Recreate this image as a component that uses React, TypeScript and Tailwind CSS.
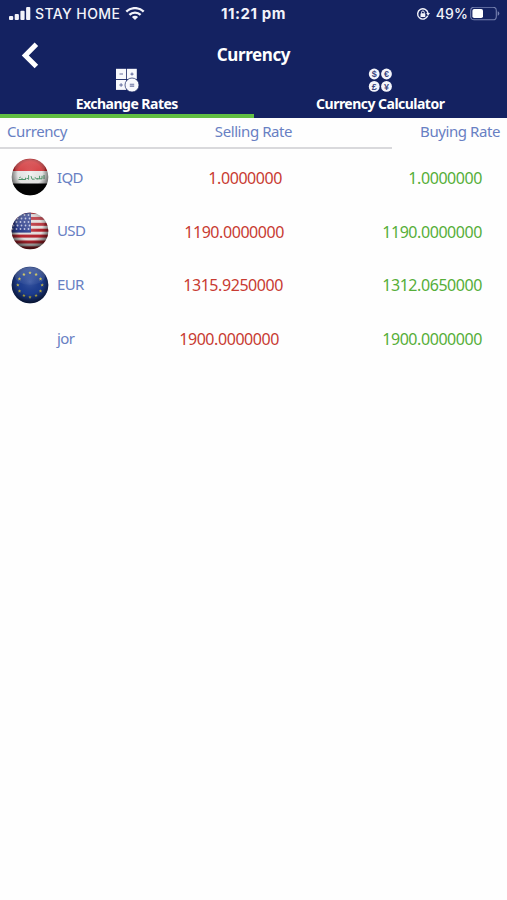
import { ReactNode } from "react";

type Rate = {
  code: string;
  flag?: ReactNode;
  selling: string;
  buying: string;
  offset: string;
};

const FlagShell = ({ id, children }: { id: string; children: ReactNode }) => (
  <svg viewBox="0 0 38 38" className="size-[38px]">
    <defs>
      <clipPath id={`${id}-clip`}>
        <circle cx="19" cy="19" r="18.3" />
      </clipPath>
      <radialGradient id={`${id}-shade`} cx="50%" cy="42%" r="58%">
        <stop offset="0" stopColor="#fff" stopOpacity="0.14" />
        <stop offset="0.55" stopColor="#000" stopOpacity="0.05" />
        <stop offset="1" stopColor="#000" stopOpacity="0.75" />
      </radialGradient>
      <linearGradient id={`${id}-gloss`} x1="0" y1="0" x2="0" y2="1">
        <stop offset="0" stopColor="#fff" stopOpacity="0.25" />
        <stop offset="1" stopColor="#fff" stopOpacity="0.03" />
      </linearGradient>
    </defs>
    <g clipPath={`url(#${id}-clip)`}>
      {children}
      <rect width="38" height="38" fill={`url(#${id}-shade)`} />
      <ellipse cx="19" cy="10" rx="15" ry="9" fill={`url(#${id}-gloss)`} />
    </g>
  </svg>
);

const IraqFlag = () => (
  <FlagShell id="iq">
    <rect width="38" height="13" fill="#dc3034" />
    <rect y="13" width="38" height="12.5" fill="#f0f0ef" />
    <rect y="25.5" width="38" height="13" fill="#050505" />
    <g fill="none" stroke="#4d9a6b" strokeWidth="1">
      <path d="M7.5 21.5h7v-1.8M11 21.5v-1.6M17.6 17v4.3M16 20l1.6 1.5M20 18l1 3.2h2.6M26 20.8h5v-3M28.6 20.8v-3M33 17v4" />
      <path d="M8.3 19.7l1.4-.6M14.5 21.5l1-1M24 19.2l1 1.6h2" />
    </g>
  </FlagShell>
);

const UsaFlag = () => (
  <FlagShell id="us">
    <rect width="38" height="38" fill="#eee8e7" />
    {[0, 1, 2, 3, 4, 5, 6].map((i) => (
      <rect key={i} y={i * 5.9 - 1} width="38" height="3" fill="#bd2530" />
    ))}
    <rect width="20" height="20.6" fill="#2d3f91" />
    {[3, 6.5, 10, 13.5, 17].map((y, row) =>
      [2, 6, 10, 14, 18].map((x) => (
        <circle key={`${x}-${y}`} cx={x + (row % 2) - 0.5} cy={y} r="0.9" fill="#c4cae8" />
      ))
    )}
  </FlagShell>
);

const EuroFlag = () => (
  <FlagShell id="eu">
    <rect width="38" height="38" fill="#1d3f96" />
    {Array.from({ length: 12 }, (_, i) => {
      const angle = (i * Math.PI) / 6;
      const x = 19 + Math.sin(angle) * 12.2;
      const y = 19 - Math.cos(angle) * 12.2;
      return (
        <path
          key={i}
          transform={`translate(${x} ${y})`}
          d="M0-1.8.5-.6 1.7-.5.8.3 1.1 1.5 0 .8-1.1 1.5-.8.3-1.7-.5-.5-.6Z"
          fill="#d2c64c"
        />
      );
    })}
  </FlagShell>
);

const rates: Rate[] = [
  { code: "IQD", flag: <IraqFlag />, selling: "1.0000000", buying: "1.0000000", offset: "pr-[2px]" },
  { code: "USD", flag: <UsaFlag />, selling: "1190.0000000", buying: "1190.0000000", offset: "pr-0" },
  { code: "EUR", flag: <EuroFlag />, selling: "1315.9250000", buying: "1312.0650000", offset: "pr-[1px]" },
  { code: "jor", selling: "1900.0000000", buying: "1900.0000000", offset: "pr-[5px]" },
];

const StatusBar = () => (
  <div className="grid h-7 grid-cols-3 items-center font-['Inter',sans-serif] text-[14px] leading-7 text-[#f2f3fa]">
    <div className="flex items-center pl-[9px]">
      <svg viewBox="0 0 22 14" className="h-[14px] w-[22px]" fill="currentColor">
        <rect y="9" width="4.2" height="4" rx="1" />
        <rect x="5.7" y="7" width="4.2" height="6" rx="1" />
        <rect x="11.4" y="3.7" width="4.2" height="9.3" rx="1" />
        <rect x="17.1" y="0" width="4.2" height="13" rx="1" />
      </svg>
      <span className="ml-[4px] font-medium tracking-[0.4px]">STAY HOME</span>
      <svg viewBox="0 0 20 14" className="ml-[5px] h-[14px] w-5" fill="none" stroke="currentColor">
        <path d="M1.3 4.7a12.4 12.4 0 0 1 17.4 0" strokeWidth="2.4" />
        <path d="M4.4 7.9a8 8 0 0 1 11.2 0" strokeWidth="2.3" />
        <path d="M10 13.1 6.9 10a4.4 4.4 0 0 1 6.2 0Z" fill="currentColor" stroke="none" />
      </svg>
    </div>
    <span className="text-center text-[15px] font-bold tracking-[0.55px]">11:21 pm</span>
    <div className="flex items-center justify-end pr-[7px]">
      <svg viewBox="0 0 14 14" className="size-[14px]" fill="none" stroke="currentColor">
        <path d="M11.7 8.8A5.2 5.2 0 1 1 12 6.2" strokeWidth="1.4" />
        <path d="M10.2 6h3.8l-1.9 2.7Z" fill="currentColor" stroke="none" />
        <rect x="4.5" y="6.3" width="4.8" height="3.7" rx="0.6" fill="currentColor" stroke="none" />
        <path d="M5.5 6.5V5.4a1.4 1.4 0 0 1 2.8 0v1.1" />
      </svg>
      <span className="ml-[6px] font-medium tracking-[0.15px]">49%</span>
      <svg viewBox="0 0 30 14" className="ml-[2px] h-[14px] w-[30px]">
        <rect x="0.7" y="0.2" width="25.6" height="12.6" rx="3.4" fill="none" stroke="#7681b0" strokeWidth="1.1" />
        <rect x="2.4" y="1.9" width="10.6" height="9.2" rx="1.8" fill="#fff" />
        <path d="M27.7 4.2q1.6.6 1.6 2.3t-1.6 2.3Z" fill="#7681b0" />
      </svg>
    </div>
  </div>
);

const CalculatorIcon = () => (
  <svg viewBox="0 0 24 24" className="h-6 w-6">
    <g fill="#f8f9fd">
      <rect x="1" y="0.8" width="10.2" height="10.2" />
      <rect x="12" y="0.8" width="9.8" height="10.2" />
      <rect x="1" y="11.9" width="10.2" height="10" />
      <circle cx="17" cy="17" r="7" stroke="#142261" strokeWidth="0.7" />
    </g>
    <g stroke="#6871a0" strokeWidth="1.1" fill="none">
      <path d="M4.5 6h3.5M17 4.6v3M15.5 6.1h3M6.1 15.2v3.6M4.3 17h3.6M14.8 16.3h4.4M14.8 18.1h4.4" />
    </g>
  </svg>
);

const CoinsIcon = () => (
  <svg viewBox="0 0 24 24" className="h-6 w-6 font-['Liberation_Sans',sans-serif] text-[9px] font-bold">
    {[
      ["$", 6.2, 6],
      ["€", 18.5, 6],
      ["£", 6.2, 18.4],
      ["¥", 18.5, 18.4],
    ].map(([sign, x, y]) => (
      <g key={sign}>
        <circle cx={x} cy={y} r="5.4" fill="#f4f5fb" />
        <text x={x} y={Number(y) + 3.2} textAnchor="middle" fill="#3a467f">
          {sign}
        </text>
      </g>
    ))}
  </svg>
);

const Header = () => (
  <header className="h-[118px] bg-[#142261] text-white">
    <StatusBar />
    <div className="grid h-[40px] grid-cols-3 items-center pt-[13px]">
      <button className="ml-[21px] w-5" aria-label="Back">
        <svg viewBox="0 0 18 28" className="h-[28px] w-[18px]" fill="none" stroke="#fff" strokeWidth="5">
          <path d="M15.4 3.3 4.3 14.4 15.4 25.5" />
        </svg>
      </button>
      <h1 className="text-center text-[17px] leading-6 font-bold tracking-[-0.4px]">Currency</h1>
    </div>
    <nav className="grid h-[50px] grid-cols-2 text-[14px] leading-[18px] font-bold">
      <button className="flex flex-col items-center border-b-4 border-[#61bf43]">
        <CalculatorIcon />
        <span className="mt-[3px] tracking-[-0.52px]">Exchange Rates</span>
      </button>
      <button className="flex flex-col items-center">
        <CoinsIcon />
        <span className="mt-[3px] tracking-[-0.52px]">Currency Calculator</span>
      </button>
    </nav>
  </header>
);

const RateRow = ({ rate }: { rate: Rate }) => (
  <div className="grid h-[53.7px] grid-cols-[57px_77px_150px_1fr] items-center text-[16px] tracking-[-0.43px]">
    <div className="pb-[1px] pl-[11px]">{rate.flag}</div>
    <span className="pb-[2px] text-[15px] tracking-[-0.6px] text-[#6880c3]">{rate.code}</span>
    <span className={`text-right text-[#c83b32] ${rate.offset}`}>{rate.selling}</span>
    <span className="pr-[25px] text-right text-[#56ae39]">{rate.buying}</span>
  </div>
);

const App = () => (
  <div className="min-h-[900px] w-[507px] overflow-hidden bg-[#fefefe] font-['Noto_Sans',sans-serif]">
    <Header />
    <main>
      <div className="grid h-[29px] grid-cols-3 px-[7px] text-[15px] leading-[26px] tracking-[-0.42px] text-[#6880c3]">
        <span>Currency</span>
        <span className="text-center">Selling Rate</span>
        <span className="text-right">Buying Rate</span>
      </div>
      <div className="h-[2px] w-[392px] bg-[#d9d9dc]" />
      <div className="pt-[2px]">
        {rates.map((rate) => (
          <RateRow key={rate.code} rate={rate} />
        ))}
      </div>
    </main>
  </div>
);

export default App;
